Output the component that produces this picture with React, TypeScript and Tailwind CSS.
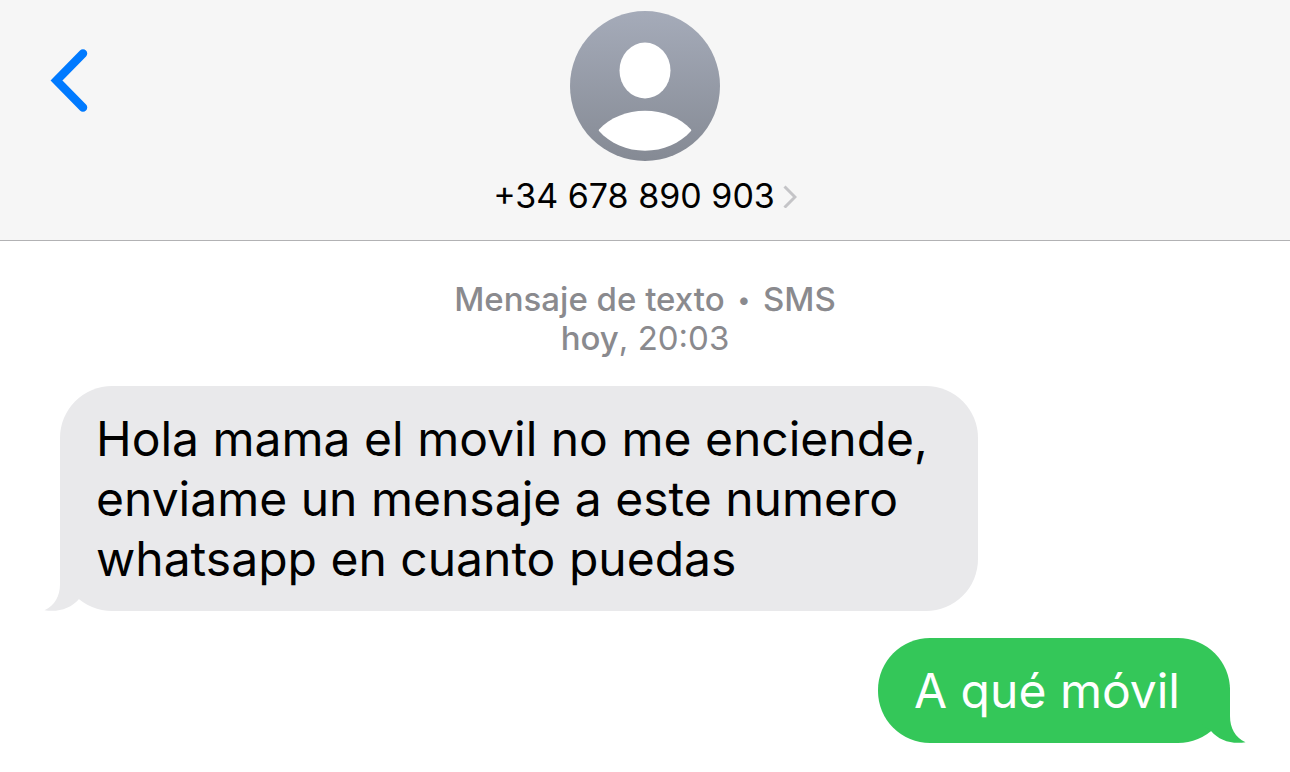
import type { ReactNode } from "react";

type Side = "received" | "sent";

function Avatar() {
  return (
    <svg viewBox="0 0 150 150" className="size-[150px]" aria-hidden="true">
      <defs>
        <linearGradient id="avatar-fill" x1="0" y1="0" x2="0" y2="1">
          <stop offset="0" stopColor="#a5abb9" />
          <stop offset="1" stopColor="#858a94" />
        </linearGradient>
      </defs>
      <circle cx="75" cy="75" r="75" fill="url(#avatar-fill)" />
      <ellipse cx="75" cy="59.5" rx="25.5" ry="28" fill="#fff" />
      <path
        d="M29 118.500C40 106.500 57 99.700 75 99.700S110 106.500 121 118.500Q121.600 119.300 121 120C110 132.500 93 139.700 75 139.700S40 132.500 29 120Q28.400 119.300 29 118.500Z"
        fill="#fff"
      />
    </svg>
  );
}

function Tail({ side }: { side: Side }) {
  const place =
    side === "received"
      ? "-left-4 text-[#e9e9eb]"
      : "-right-4 -scale-x-100 text-[#34c759]";
  return (
    <svg
      viewBox="0 0 48 56"
      className={`absolute bottom-0 h-14 w-12 ${place}`}
      aria-hidden="true"
    >
      <path
        d="M16 0V29C16 41 11 50.500 0.500 55.200C14 57.500 27 53.500 35 44L48 34Z"
        fill="currentColor"
      />
    </svg>
  );
}

function Bubble({ side, children }: { side: Side; children: ReactNode }) {
  const look =
    side === "received"
      ? "self-start bg-[#e9e9eb] text-black"
      : "self-end bg-[#34c759] text-white";
  return (
    <li
      className={`relative w-fit rounded-[52px] pt-[23px] pr-[50px] pb-[22px] pl-9 text-[48px] leading-[60px] ${look}`}
    >
      <Tail side={side} />
      <p className="relative">{children}</p>
    </li>
  );
}

export default function App() {
  return (
    <div className="min-h-screen bg-white font-['Inter',sans-serif] text-black">
      <header className="grid grid-cols-[1fr_auto_1fr] items-start border-b border-[#b2b2b4] bg-[#f6f6f6] px-[50px] pt-[11px] pb-[25px]">
        <button
          type="button"
          aria-label="Atrás"
          className="mt-[37px] justify-self-start text-[#007aff]"
        >
          <svg viewBox="0 0 38 64" className="h-16 w-[38px]" aria-hidden="true">
            <path
              d="M33 5.500L6.500 32.500L33 59.500"
              fill="none"
              stroke="currentColor"
              strokeWidth="8.500"
              strokeLinecap="round"
              strokeLinejoin="miter"
            />
          </svg>
        </button>
        <button type="button" className="flex flex-col items-center gap-[15px]">
          <Avatar />
          <span className="flex items-center gap-2 text-[34px] leading-[39px]">
            <span>+34 678 890 903</span>
            <svg viewBox="0 0 14 24" className="h-6 w-3.5" aria-hidden="true">
              <path
                d="M1.500 2.500L12 13L1.500 23.500"
                fill="none"
                stroke="#c4c4c7"
                strokeWidth="3"
              />
            </svg>
          </span>
        </button>
      </header>

      <main className="px-[60px] pt-[39px] pb-[29px]">
        <p className="text-center text-[33px] leading-[39px] text-[#8a8a8e]">
          <span className="font-medium">
            Mensaje de texto{" "}
            <span className="mx-1 align-[3px] text-2xl leading-none">•</span> SMS
          </span>
          <br />
          <span className="font-medium">hoy</span>, <time>20:03</time>
        </p>
        <ul className="mt-7 flex flex-col gap-[27px]">
          <Bubble side="received">
            Hola mama el movil no me enciende,
            <br />
            enviame un mensaje a este numero
            <br />
            whatsapp en cuanto puedas
          </Bubble>
          <Bubble side="sent">A qué móvil</Bubble>
        </ul>
      </main>
    </div>
  );
}
